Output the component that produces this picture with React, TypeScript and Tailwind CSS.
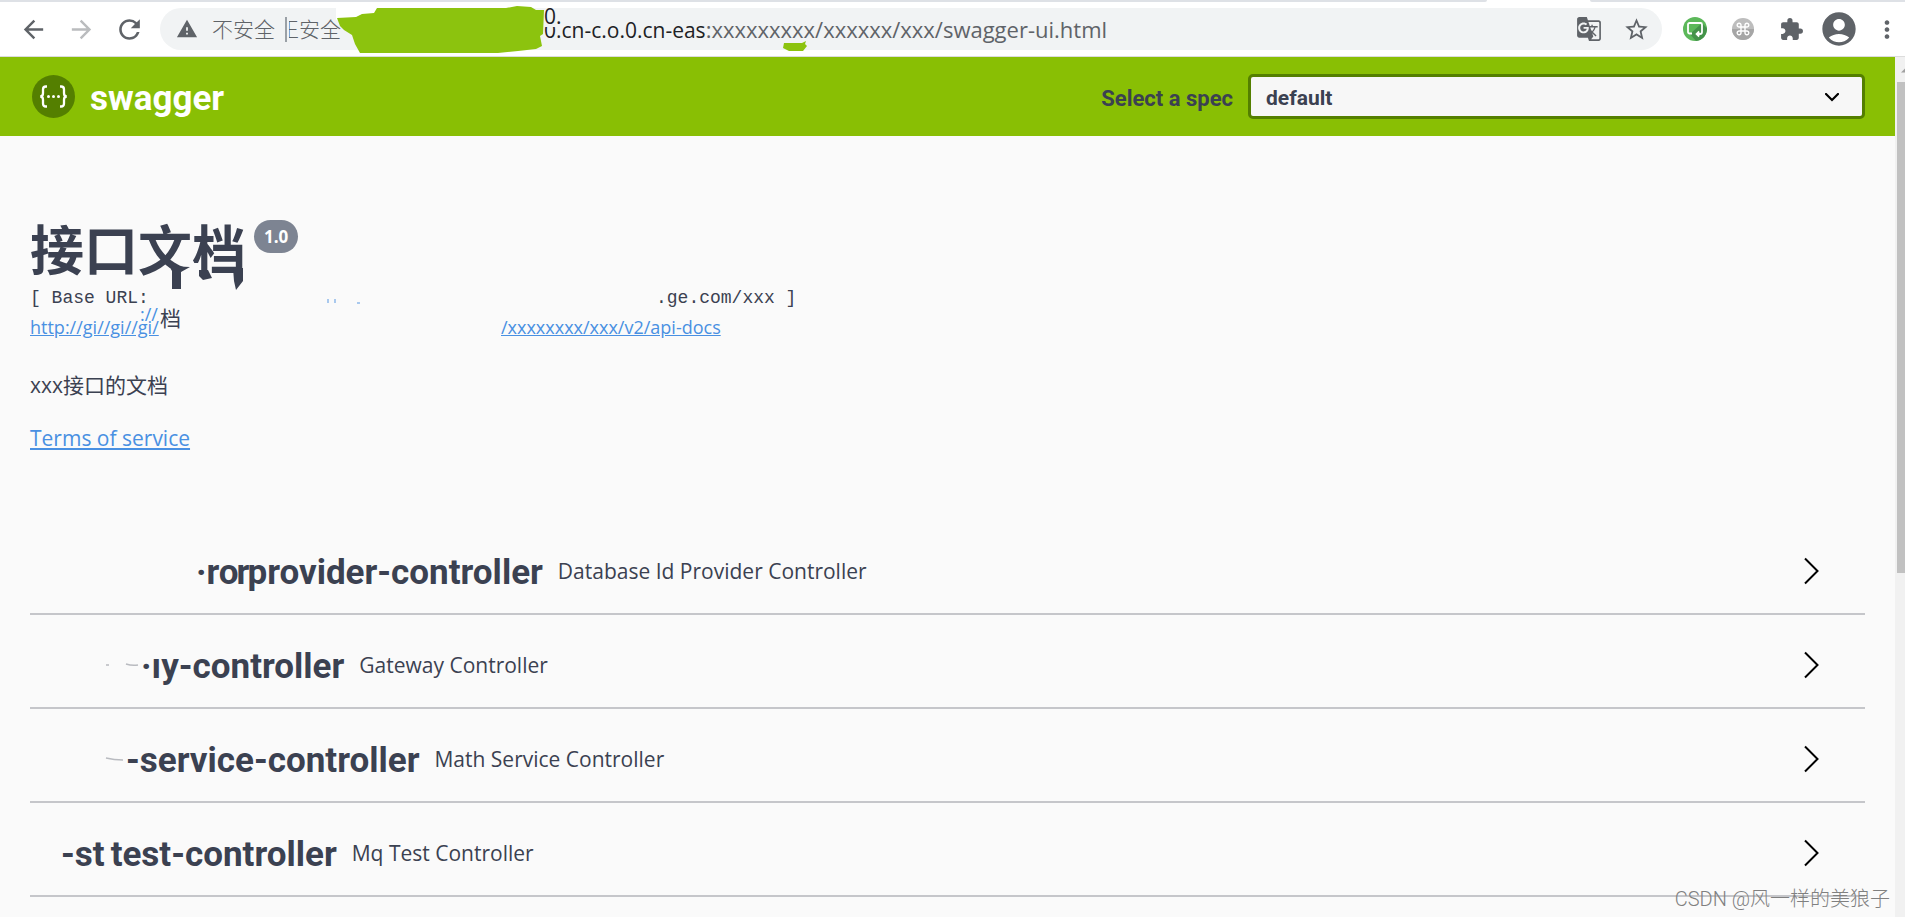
import type { ReactNode } from "react";
import {
  MdAccountCircle,
  MdArrowBack,
  MdArrowForward,
  MdExtension,
  MdGTranslate,
  MdMoreVert,
  MdRefresh,
  MdStarBorder,
  MdWarning,
} from "react-icons/md";

function IconButton({ label, className, children }: { label: string; className: string; children: ReactNode }) {
  return (
    <button type="button" aria-label={label} className={`flex shrink-0 items-center justify-center ${className}`}>
      {children}
    </button>
  );
}

function AddressBar() {
  return (
    <div className="relative ml-[15px] flex h-[42px] flex-1 items-center rounded-full bg-[#f1f3f4] pr-[12px] pl-[16px] text-[21px] leading-[40px] whitespace-nowrap text-[#5f6368]">
      <MdWarning size={22} className="shrink-0 text-[#5f6368]" />
      <span className="ml-[14px] font-light">不安全</span>
      <span className="ml-[10px] h-[25px] w-[2px] shrink-0 bg-[#9aa0a6]" />
      <span className="ml-[2px] flex w-[10px] shrink-0 justify-end overflow-hidden font-light">正</span>
      <span className="font-light">安全</span>
      <span className="ml-auto w-[1031px]">
        <span className="text-[#202124]">0.cn-c.o.0.cn-eas</span>
        <span className="text-[22px]">:xxxxxxxxx/xxxxxx/xxx/swagger-ui.html</span>
      </span>
      <svg className="absolute -top-[4px] left-[176px]" width="220" height="54" viewBox="338 4 220 54" aria-hidden="true">
        <path d="M338 4h44l-3 10-12 2-8 2-21 2z" fill="#fff" />
        <path
          d="M339 18L358 17 364 14 376 13 379 8 508 8 519 6 533 7 538 10 546 10 545 34 542 36 544 46 538 49 520 51 500 53 362 53 357 44 354 35 346 30 342 26z"
          fill="#8cc30e"
        />
      </svg>
      <span className="absolute top-0 left-[384px] h-[19px] bg-[#f1f3f4] leading-[17px] text-[#202124]">0.</span>
      <svg className="absolute top-[33px] left-[621px]" width="30" height="12" viewBox="0 0 30 12" aria-hidden="true">
        <path d="M3 2h18l4-2-1 3 2 2-4 5-14 0-6-3z" fill="#8cc30e" />
      </svg>
      <IconButton label="Translate this page" className="w-[28px] text-[#5f6368]">
        <MdGTranslate size={26} />
      </IconButton>
      <IconButton label="Bookmark this page" className="ml-[19px] w-[28px] text-[#5f6368]">
        <MdStarBorder size={27} />
      </IconButton>
    </div>
  );
}

function Toolbar() {
  return (
    <div className="border-b border-[#dcdcdc] bg-white">
      <div className="flex h-[2px] justify-between">
        <div className="w-[1487px] rounded-br-full bg-[#dee1e6]" />
        <div className="w-[315px] rounded-bl-full bg-[#dee1e6]" />
      </div>
      <div className="flex items-center py-[6px] pr-[4px] pl-[18px] text-[#5f6368]">
        <IconButton label="Back" className="w-[30px]">
          <MdArrowBack size={29} />
        </IconButton>
        <IconButton label="Forward" className="ml-[18px] w-[30px] text-[#babcbe]">
          <MdArrowForward size={29} />
        </IconButton>
        <IconButton label="Reload" className="ml-[17px] w-[32px]">
          <MdRefresh size={31} />
        </IconButton>
        <AddressBar />
        <IconButton label="Screen capture" className="ml-[20px] w-[26px]">
          <svg width="24" height="24" viewBox="0 0 24 24">
            <circle cx="12" cy="12" r="12" fill="#5cb85a" />
            <path d="M19 6l5 5.500a12 12 0 0 1-11 12.400L7 17z" fill="#44934a" />
            <path
              d="M9 16.500H6.500a1.500 1.500 0 0 1-1.500-1.500V7.500A1.500 1.500 0 0 1 6.500 6h11A1.500 1.500 0 0 1 19 7.500V15a2 2 0 0 1-2 2h-3M16.200 14.500L13.600 17l2.600 2.500"
              fill="none"
              stroke="#fff"
              strokeWidth="1.800"
            />
          </svg>
        </IconButton>
        <IconButton label="Shortcuts" className="ml-[22px] w-[26px]">
          <svg width="22" height="22" viewBox="0 0 22 22">
            <circle cx="11" cy="11" r="11" fill="#bdbdbd" />
            <path d="M0 11a11 11 0 0 0 22 0z" fill="#a6a6a6" />
            <path
              d="M9 9h4v4H9zM9 9H7.200A1.900 1.900 0 1 1 9 7.200zM13 9V7.200A1.900 1.900 0 1 1 14.800 9zM13 13h1.800A1.900 1.900 0 1 1 13 14.800zM9 13v1.800A1.900 1.900 0 1 1 7.200 13z"
              fill="none"
              stroke="#fff"
              strokeWidth="1.400"
            />
          </svg>
        </IconButton>
        <IconButton label="Extensions" className="ml-[22px] w-[26px]">
          <MdExtension size={25} />
        </IconButton>
        <IconButton label="Profile" className="ml-[15px] w-[40px]">
          <MdAccountCircle size={40} />
        </IconButton>
        <IconButton label="More" className="ml-[14px] w-[28px]">
          <MdMoreVert size={29} />
        </IconButton>
      </div>
    </div>
  );
}

function SwaggerHeader() {
  return (
    <header className="flex h-[79px] items-center justify-between bg-[#89bf04] pr-[30px] pl-[32px] font-['Roboto',sans-serif] font-bold">
      <a href="#top" className="flex items-center gap-[15px] text-[35px] leading-[44px] text-white">
        <svg width="43" height="43" viewBox="0 0 43 43" aria-hidden="true">
          <circle cx="21.500" cy="21.500" r="21.500" fill="#547f00" />
          <path
            d="M15 11.500h-1.200q-2.800 0-2.800 3v3.800q0 3.200-2.800 3.200 2.800 0 2.800 3.200v3.800q0 3 2.800 3H15M28 11.500h1.200q2.800 0 2.800 3v3.800q0 3.200 2.800 3.200-2.800 0-2.800 3.200v3.800q0 3-2.800 3H28"
            fill="none"
            stroke="#fff"
            strokeWidth="2.300"
          />
          <circle cx="16.500" cy="21.500" r="1.500" fill="#fff" />
          <circle cx="21.500" cy="21.500" r="1.500" fill="#fff" />
          <circle cx="26.500" cy="21.500" r="1.500" fill="#fff" />
        </svg>
        <span className="pt-[4px]">swagger</span>
      </a>
      <div className="flex items-center gap-[15px] text-[#3b4151]">
        <label htmlFor="spec" className="pt-[4px] text-[22px]">
          Select a spec
        </label>
        <div className="relative">
          <select
            id="spec"
            className="h-[45px] w-[617px] appearance-none rounded-[5px] border-[3px] border-[#547f00] bg-[#f7f7f7] px-[15px] pt-[4px] text-[21px]"
          >
            <option>default</option>
          </select>
          <svg
            className="pointer-events-none absolute top-[19px] right-[26px]"
            width="14"
            height="9"
            viewBox="0 0 14 9"
            aria-hidden="true"
          >
            <path d="M1 1l6 6 6-6" fill="none" stroke="#000" strokeWidth="2.200" strokeLinecap="round" />
          </svg>
        </div>
      </div>
    </header>
  );
}

function TitleSmudge() {
  return (
    <svg className="absolute top-[41px] left-[132px]" width="90" height="38" viewBox="162 255 90 38" aria-hidden="true">
      <path d="M168 270l4-3h20v13h-24zM191 263h7v16h-7zM212 275h21v5h-21z" fill="#fafafa" />
      <path
        d="M169 266L190 267 181 272V289H172V271zM199 270h9l4 8-9 2-4-4zM233 268h10v13l-7 9-2-9z"
        fill="#3b4151"
      />
    </svg>
  );
}

function Info() {
  return (
    <section className="pt-[78px] text-[21px] text-[#3b4151]">
      <div className="relative flex items-start gap-[8px]">
        <h1 className="text-[54px] leading-[72px] font-bold">接口文档</h1>
        <TitleSmudge />
        <span className="mt-[6px] rounded-full bg-[#7d8492] px-[10px] text-[17px] leading-[33px] font-bold text-white">
          1.0
        </span>
      </div>
      <pre className="relative flex h-[24px] font-['Liberation_Mono','Noto_Sans_CJK_SC',monospace] text-[18px] leading-[24px]">
        <span className="w-[626px]">[ Base URL:</span>
        <span>.ge.com/xxx ]</span>
        <svg className="absolute top-[12px] left-[296px]" width="36" height="8" viewBox="0 0 36 8" aria-hidden="true">
          <path d="M2 1v4M9 1v4M31 5h3" stroke="#8fb9ea" strokeWidth="1.500" />
        </svg>
      </pre>
      <div className="relative flex h-[34px] text-[18px] leading-[34px] text-[#4990e2]">
        <a href="#api-docs" className="w-[471px]">
          <span className="underline">http://gi//gi//gi/</span>
        </a>
        <a href="#api-docs" className="underline">
          /xxxxxxxx/xxx/v2/api-docs
        </a>
        <span className="absolute -top-[8px] left-[110px] leading-[24px]">://</span>
        <span className="absolute -top-[4px] left-[130px] bg-[#fafafa] text-[21px] leading-[24px] text-[#3b4151]">档</span>
      </div>
      <p className="mt-[25px] leading-[32px]">xxx接口的文档</p>
      <p className="mt-[21px] leading-[32px]">
        <a href="#terms" className="text-[#4990e2] underline">
          Terms of service
        </a>
      </p>
    </section>
  );
}

type Controller = { hidden: string; join: string; parts: string[]; title: string; mark?: ReactNode };

const controllers: Controller[] = [
  {
    hidden: "w-[166px]",
    join: "-space-x-[2px]",
    parts: ["·ro", "r", "provider-controller"],
    title: "Database Id Provider Controller",
  },
  {
    hidden: "w-[111px]",
    join: "",
    parts: ["·", "ı", "y-controller"],
    title: "Gateway Controller",
    mark: <path d="M76 8h3M96 7q6 2 12 1" />,
  },
  {
    hidden: "w-[96px]",
    join: "",
    parts: ["-service-controller"],
    title: "Math Service Controller",
    mark: <path d="M76 7q8 2 17 2" />,
  },
  { hidden: "w-[31px]", join: "gap-[6px]", parts: ["-st", "test-controller"], title: "Mq Test Controller" },
];

function ControllerRow({ hidden, join, parts, title, mark }: Controller) {
  return (
    <li className="flex h-[94px] items-center border-b-2 border-[#c5c6ca] pt-[8px] pr-[46px] text-[#3b4151]">
      <span className={`shrink-0 ${hidden}`}>
        {mark && (
          <svg width="110" height="16" viewBox="0 0 110 16" fill="none" stroke="#b9bbc0" strokeWidth="1.500" aria-hidden="true">
            {mark}
          </svg>
        )}
      </span>
      <h2 className={`flex pt-[4px] font-['Roboto',sans-serif] text-[35px] leading-[44px] font-bold ${join}`}>
        {parts.map((part) => (
          <span key={part}>{part}</span>
        ))}
      </h2>
      <span className="ml-[15px] text-[21px] leading-[32px]">{title}</span>
      <button type="button" aria-label={`Expand ${title}`} className="ml-auto">
        <svg width="15" height="28" viewBox="0 0 15 28" fill="none" stroke="#000" strokeWidth="2">
          <path d="M1 1.500L13.500 14 1 26.500" />
        </svg>
      </button>
    </li>
  );
}

export default function App() {
  return (
    <div className="relative flex h-screen flex-col overflow-hidden bg-[#fafafa] font-['Open_Sans','Noto_Sans_CJK_SC',sans-serif]">
      <Toolbar />
      <div className="flex flex-1">
        <main className="flex-1">
          <SwaggerHeader />
          <div className="px-[30px]">
            <Info />
            <ul className="mt-[67px]">
              {controllers.map((controller) => (
                <ControllerRow key={controller.title} {...controller} />
              ))}
            </ul>
          </div>
        </main>
        <div className="flex w-[10px] flex-col bg-[#f1f1f1] pl-[2px]" aria-hidden="true">
          <svg width="8" height="25" viewBox="0 0 8 25">
            <path d="M4 15.500l5-5v5z" fill="#a0a0a0" />
          </svg>
          <div className="h-[491px] bg-[#c1c1c1]" />
        </div>
      </div>
      <div className="absolute right-[15px] bottom-[3px] font-['Roboto','Noto_Sans_CJK_SC',sans-serif] text-[20px] leading-[30px] font-light text-[#808080]">
        CSDN @风一样的美狼子
      </div>
    </div>
  );
}
